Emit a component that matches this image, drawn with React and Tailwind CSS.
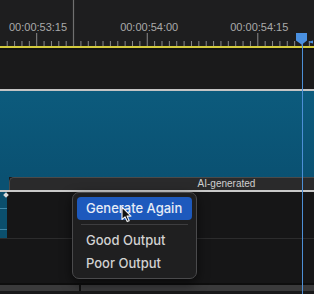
import React from "react";

const ticks = [];
for (let k = -5; k <= 38; k++) {
  const x = 36.7 + 7.37 * k;
  if (x > 0 && x < 314) ticks.push({ x, major: k % 15 === 0 });
}

function Ruler() {
  return (
    <div className="relative h-[46px] bg-[#1e1e1f]">
      <svg className="absolute inset-0" width="314" height="46">
        {ticks.map((t, i) => (
          <line
            key={i}
            x1={t.x}
            x2={t.x}
            y1={t.major ? 33 : 41}
            y2={46}
            stroke="#8a8a8a"
            strokeWidth="1"
          />
        ))}
        <line x1="73.5" x2="73.5" y1="0" y2="46" stroke="#707070" strokeWidth="1.2" />
      </svg>
      <div className="absolute top-[21px] left-0 right-0 flex text-[11px] leading-[13px] text-[#aaaaaa] font-['Liberation_Sans',sans-serif]">
        <span className="ml-[9px]">00:00:53:15</span>
        <span className="ml-[53px]">00:00:54:00</span>
        <span className="ml-[52px]">00:00:54:15</span>
      </div>
    </div>
  );
}

function Cursor() {
  return (
    <svg width="12" height="17" viewBox="0 0 12 17" className="absolute left-[121px] top-[206px]">
      <path
        d="M1 1 L1 13.5 L4 10.8 L6.2 15.6 L8.2 14.7 L6.1 10.1 L10 10.1 Z"
        fill="#111"
        stroke="#f2f2f2"
        strokeWidth="1.1"
        strokeLinejoin="round"
      />
    </svg>
  );
}

function Menu() {
  return (
    <div className="absolute left-[72px] top-[192px] w-[125px] h-[87px] rounded-[7px] border border-[#4a4a4c] bg-[#1f1f20] shadow-[0_4px_12px_rgba(0,0,0,0.6)] p-[4px] font-['Inter',sans-serif] text-[13px] font-medium text-[#d2d2d2]">
      <div className="h-[23px] rounded-[4px] bg-[#1d59bd] pl-[9px] flex items-center text-[#e6ecf7]">
        Generate Again
      </div>
      <div className="mx-[4px] my-[4px] h-px bg-[#3d3d3f]" />
      <div className="h-[23px] pl-[9px] flex items-center pt-px">Good Output</div>
      <div className="h-[23px] pl-[9px] flex items-center pt-px">Poor Output</div>
    </div>
  );
}

export default function App() {
  return (
    <div className="relative w-[314px] h-[294px] overflow-hidden bg-[#19191a]">
      <Ruler />
      <div className="h-[2px] bg-[#d4cb3e]" />
      <div className="h-[41px] bg-[#1a1a1b] border-t-2 border-[#121212]" />
      <div className="h-[2px] bg-[#c4c4c4]" />
      <div className="h-[86px] bg-gradient-to-b from-[#0c5b7d] to-[#0a5172]" />
      <div className="flex h-[13px]">
        <div className="w-[9px] bg-[#0a5172]" />
        <div className="flex-1 rounded-tl-[5px] bg-[#2a2a2b] border-t border-l border-[#4a4a4a] flex justify-center pl-[81px] font-['Liberation_Sans',sans-serif] text-[10px] leading-[12px] text-[#cfcfcf]">
          <span className="ml-[48px]">AI-generated</span>
        </div>
      </div>
      <div className="h-[2px] bg-[#c9c9c9]" />
      <div className="flex h-[47px] border-b border-[#2c2c2d] bg-[#161617]">
        <div className="relative w-[7px] bg-[#0b4f6d] flex flex-col justify-between py-[8px]">
          <div className="absolute right-0 top-0 w-[4px] h-[4px] bg-[#dcdcdc] rotate-45 translate-x-[1px] translate-y-[1px]" />
          <div className="h-px bg-[#3f87a8] mt-[8px]" />
          <div className="h-px bg-[#3f87a8]" />
        </div>
        <div className="flex-1" />
      </div>
      <div className="h-[46px] bg-[#161617] border-b-2 border-[#0e0e0e]" />
      <div className="flex h-[6px] bg-[#3a3a3b]">
        <div className="w-[79px]" />
        <div className="w-[2px] bg-[#111]" />
      </div>

      {/* playhead */}
      <div className="absolute left-[302px] top-[40px] bottom-0 w-px bg-[#4d8fd6]" />
      <svg className="absolute left-[295px] top-[32px]" width="19" height="14" viewBox="0 0 19 14">
        <path d="M1 1 H12 V8.5 L7 12.5 L6.5 12.5 L1 8.5 Z" fill="#4a90e0" />
        <path d="M13 10 L18 8.5 L18 11.5 Z" fill="#4a90e0" />
      </svg>

      <Menu />
      <Cursor />
    </div>
  );
}
